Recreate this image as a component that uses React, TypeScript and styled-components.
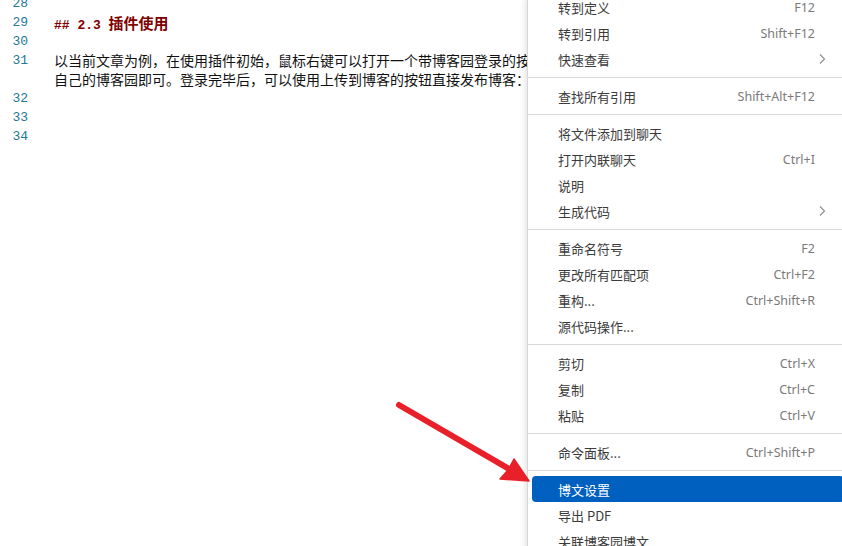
import React from "react";
import styled, { createGlobalStyle } from "styled-components";

const Global = createGlobalStyle`
  html, body { margin: 0; padding: 0; background: #ffffff; overflow: hidden; }
  #root { width: 842px; height: 546px; }
`;

const Page = styled.div`
  position: relative;
  width: 842px;
  height: 546px;
  overflow: hidden;
  background: #ffffff;
`;

const Editor = styled.div`
  display: flex;
  flex-direction: column;
  margin-top: -6px;
`;

const Line = styled.div`
  display: grid;
  grid-template-columns: 28px 26px 1fr;
  line-height: 19px;
`;

const LineNo = styled.div`
  grid-column: 1;
  text-align: right;
  font-family: "Liberation Mono", "DejaVu Sans Mono", monospace;
  font-size: 13px;
  color: #237893;
  height: 19px;
`;

const Content = styled.div`
  grid-column: 3;
  min-height: 19px;
  display: flex;
  flex-direction: column;
`;

const Heading = styled.div`
  color: #800000;
  font-weight: bold;
  white-space: nowrap;
  height: 19px;
`;

const Mono = styled.span`
  font-family: "Liberation Mono", "DejaVu Sans Mono", monospace;
  font-size: 13px;
`;

const Cjk = styled.span`
  font-family: "Noto Sans CJK SC", sans-serif;
  font-size: 15px;
`;

const Para = styled.div`
  font-family: "Noto Sans CJK SC", sans-serif;
  font-size: 14px;
  color: #111111;
  white-space: nowrap;
  height: 19px;
`;

const Menu = styled.div`
  position: absolute;
  left: 527px;
  top: -6px;
  width: 320px;
  background: #ffffff;
  border-left: 1px solid #d6d6d6;
  box-shadow: 0 2px 8px rgba(0, 0, 0, 0.16);
  display: flex;
  flex-direction: column;
  font-family: "Noto Sans CJK SC", sans-serif;
  font-size: 13px;
`;

const Item = styled.div<{ $active?: boolean }>`
  display: flex;
  align-items: center;
  height: 26px;
  margin: 0 4px;
  padding: 0 29px 0 26px;
  border-radius: 4px;
  background: ${(p) => (p.$active ? "#0060c0" : "transparent")};
  color: ${(p) => (p.$active ? "#ffffff" : "#3b3b3b")};
`;

const Label = styled.span`
  flex: 1;
  white-space: nowrap;
`;

const Shortcut = styled.span<{ $active?: boolean }>`
  color: ${(p) => (p.$active ? "#ffffff" : "#7a7a7a")};
  font-family: "Noto Sans", "Open Sans", sans-serif;
  font-size: 12.5px;
  white-space: nowrap;
`;

const Chevron = styled.svg`
  width: 8px;
  height: 12px;
  margin-right: -11px;
`;

const Sep = styled.div`
  height: 11px;
  display: flex;
  align-items: center;
  &::after {
    content: "";
    flex: 1;
    height: 1px;
    background: #d8d8d8;
  }
`;

const Arrow = styled.svg`
  position: absolute;
  left: 0;
  top: 0;
  width: 842px;
  height: 546px;
  pointer-events: none;
`;

type Entry =
  | { sep: true }
  | { label: string; key?: string; sub?: boolean; active?: boolean };

const entries: Entry[] = [
  { label: "转到定义", key: "F12" },
  { label: "转到引用", key: "Shift+F12" },
  { label: "快速查看", sub: true },
  { sep: true },
  { label: "查找所有引用", key: "Shift+Alt+F12" },
  { sep: true },
  { label: "将文件添加到聊天" },
  { label: "打开内联聊天", key: "Ctrl+I" },
  { label: "说明" },
  { label: "生成代码", sub: true },
  { sep: true },
  { label: "重命名符号", key: "F2" },
  { label: "更改所有匹配项", key: "Ctrl+F2" },
  { label: "重构...", key: "Ctrl+Shift+R" },
  { label: "源代码操作..." },
  { sep: true },
  { label: "剪切", key: "Ctrl+X" },
  { label: "复制", key: "Ctrl+C" },
  { label: "粘贴", key: "Ctrl+V" },
  { sep: true },
  { label: "命令面板...", key: "Ctrl+Shift+P" },
  { sep: true },
  { label: "博文设置", active: true },
  { label: "导出 PDF" },
  { label: "关联博客园博文" },
];

export default function App() {
  return (
    <Page>
      <Global />
      <Editor>
        <Line>
          <LineNo>28</LineNo>
          <Content />
        </Line>
        <Line>
          <LineNo>29</LineNo>
          <Content>
            <Heading>
              <Mono>## 2.3 </Mono>
              <Cjk>插件使用</Cjk>
            </Heading>
          </Content>
        </Line>
        <Line>
          <LineNo>30</LineNo>
          <Content />
        </Line>
        <Line>
          <LineNo>31</LineNo>
          <Content>
            <Para>以当前文章为例，在使用插件初始，鼠标右键可以打开一个带博客园登录的按钮，点击按钮登录</Para>
            <Para>自己的博客园即可。登录完毕后，可以使用上传到博客的按钮直接发布博客：</Para>
          </Content>
        </Line>
        <Line>
          <LineNo>32</LineNo>
          <Content />
        </Line>
        <Line>
          <LineNo>33</LineNo>
          <Content />
        </Line>
        <Line>
          <LineNo>34</LineNo>
          <Content />
        </Line>
      </Editor>

      <Menu>
        {entries.map((e, i) =>
          "sep" in e ? (
            <Sep key={i} />
          ) : (
            <Item key={i} $active={e.active}>
              <Label>{e.label}</Label>
              {e.key && <Shortcut $active={e.active}>{e.key}</Shortcut>}
              {e.sub && (
                <Chevron viewBox="0 0 8 12">
                  <path d="M2 1.5 L6.5 6 L2 10.5" fill="none" stroke="#8a8a8a" strokeWidth="1.1" />
                </Chevron>
              )}
            </Item>
          )
        )}
      </Menu>

      <Arrow viewBox="0 0 842 546">
        <line x1="399" y1="405" x2="509" y2="469" stroke="#e8202a" strokeWidth="6" strokeLinecap="round" />
        <polygon points="529,481 500,479 508,470 514,459" fill="#e8202a" stroke="#e8202a" strokeWidth="1.5" strokeLinejoin="round" />
      </Arrow>
    </Page>
  );
}
